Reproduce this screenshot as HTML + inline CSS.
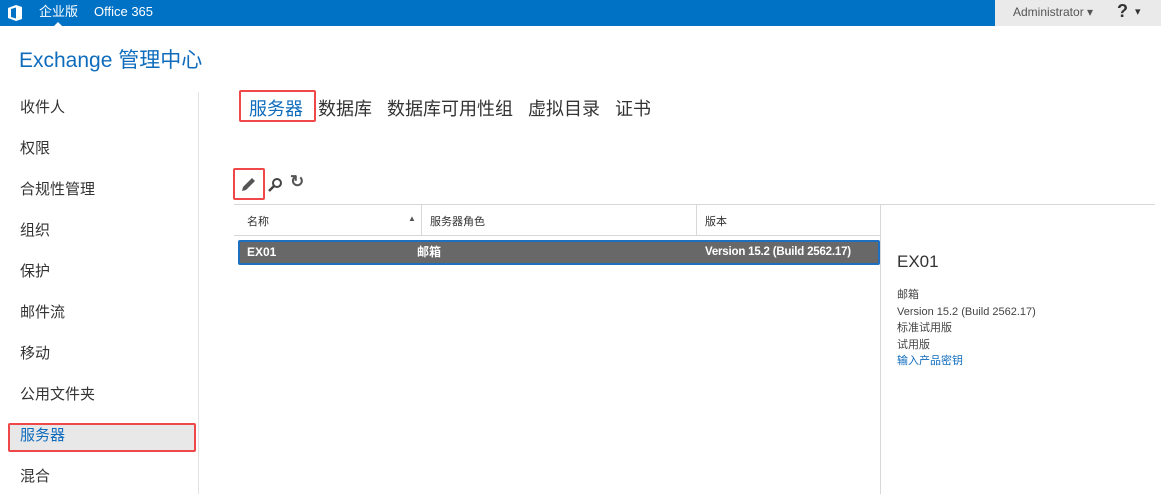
<!DOCTYPE html>
<html><head><meta charset="utf-8"><style>
*{margin:0;padding:0;box-sizing:border-box}
body{width:1161px;height:494px;overflow:hidden;background:#fff;font-family:"Liberation Sans","Noto Sans CJK SC",sans-serif;position:relative;color:#333}
.a{position:absolute;white-space:nowrap}
</style></head><body>
<div class="a" style="left:0;top:0;width:995px;height:26px;background:#0072c6"></div>
<div class="a" style="left:995px;top:0;width:166px;height:26px;background:#eaeaea"></div>
<svg class="a" style="left:6px;top:4px" width="18" height="18" viewBox="0 0 18 18"><path d="M2 4 L10 1 L16 3 L16 15 L10 17 L2 14 Z M5 5 L10 3.5 L10 14.5 L5 13 Z" fill="#fff" fill-rule="evenodd"/></svg>
<div class="a" style="left:39px;top:4px;color:#fff;font-size:13px;line-height:16px">企业版</div>
<div class="a" style="left:54px;top:22px;width:0;height:0;border-left:4px solid transparent;border-right:4px solid transparent;border-bottom:4px solid #fff"></div>
<div class="a" style="left:94px;top:4px;color:#fff;font-size:13px;line-height:16px">Office 365</div>
<div class="a" style="left:1013px;top:5px;color:#555;font-size:12px">Administrator ▾</div>
<div class="a" style="left:1117px;top:1px;color:#333;font-size:18px;font-weight:bold">?</div>
<div class="a" style="left:1135px;top:5px;color:#333;font-size:11px">▾</div>
<div class="a" style="left:19px;top:44px;color:#0f6cbd;font-size:21px">Exchange 管理中心</div>
<div class="a" style="left:20px;top:98px;font-size:15px;line-height:20px;color:#333">
<div style="height:41px">收件人</div><div style="height:41px">权限</div><div style="height:41px">合规性管理</div><div style="height:41px">组织</div><div style="height:41px">保护</div><div style="height:41px">邮件流</div><div style="height:41px">移动</div><div style="height:41px">公用文件夹</div><div style="height:41px;color:#0f6cbd">服务器</div><div>混合</div></div>
<div class="a" style="left:8px;top:423px;width:188px;height:29px;background:#e8e8e8;border:2px solid #f04848;border-radius:2px;z-index:-1"></div>
<div class="a" style="left:198px;top:92px;width:1px;height:402px;background:#e3e3e3"></div>
<div class="a" style="left:239px;top:90px;width:77px;height:32px;border:2px solid #f04848;border-radius:2px"></div>
<div class="a" style="left:249px;top:95px;font-size:18px;color:#0f6cbd">服务器</div>
<div class="a" style="left:318px;top:95px;font-size:18px;color:#333;word-spacing:10px">数据库 数据库可用性组 虚拟目录 证书</div>
<div class="a" style="left:233px;top:168px;width:32px;height:32px;border:2px solid #f04848;border-radius:2px"></div>
<svg class="a" style="left:240px;top:175px" width="18" height="18" viewBox="0 0 18 18"><path d="M2 16 L3 12 L12 3 L15 6 L6 15 Z" fill="#555"/></svg>
<svg class="a" style="left:267px;top:177px" width="16" height="16" viewBox="0 0 16 16"><circle cx="10" cy="6" r="4" stroke="#444" stroke-width="2" fill="none"/><path d="M7 9 L2 14" stroke="#444" stroke-width="2.5"/></svg>
<div class="a" style="left:290px;top:172px;font-size:17px;font-weight:bold;color:#555">↻</div>
<div class="a" style="left:234px;top:204px;width:921px;height:1px;background:#d8d8d8"></div>
<div class="a" style="left:234px;top:235px;width:646px;height:1px;background:#d8d8d8"></div>
<div class="a" style="left:421px;top:205px;width:1px;height:30px;background:#d8d8d8"></div>
<div class="a" style="left:696px;top:205px;width:1px;height:30px;background:#d8d8d8"></div>
<div class="a" style="left:880px;top:205px;width:1px;height:289px;background:#d8d8d8"></div>
<div class="a" style="left:247px;top:213px;font-size:11px;color:#333">名称</div>
<div class="a" style="left:408px;top:214px;font-size:8px;color:#555">▲</div>
<div class="a" style="left:430px;top:213px;font-size:11px;color:#333">服务器角色</div>
<div class="a" style="left:705px;top:213px;font-size:11px;color:#333">版本</div>
<div class="a" style="left:238px;top:240px;width:642px;height:25px;background:#686868;border:2px solid #1f6fc0;border-radius:2px"></div>
<div class="a" style="left:247px;top:245px;font-size:12px;line-height:15px;color:#fff;font-weight:bold">EX01</div>
<div class="a" style="left:417px;top:245px;font-size:12px;line-height:15px;color:#fff;font-weight:bold">邮箱</div>
<div class="a" style="left:705px;top:245px;font-size:11.5px;line-height:15px;color:#fff;font-weight:bold;letter-spacing:-0.2px">Version 15.2 (Build 2562.17)</div>
<div class="a" style="left:897px;top:252px;font-size:17px;color:#333">EX01</div>
<div class="a" style="left:897px;top:287px;font-size:11px;color:#444;line-height:16.5px">邮箱<br>Version 15.2 (Build 2562.17)<br>标准试用版<br>试用版<br><span style="color:#0f6cbd">输入产品密钥</span></div>
</body></html>
